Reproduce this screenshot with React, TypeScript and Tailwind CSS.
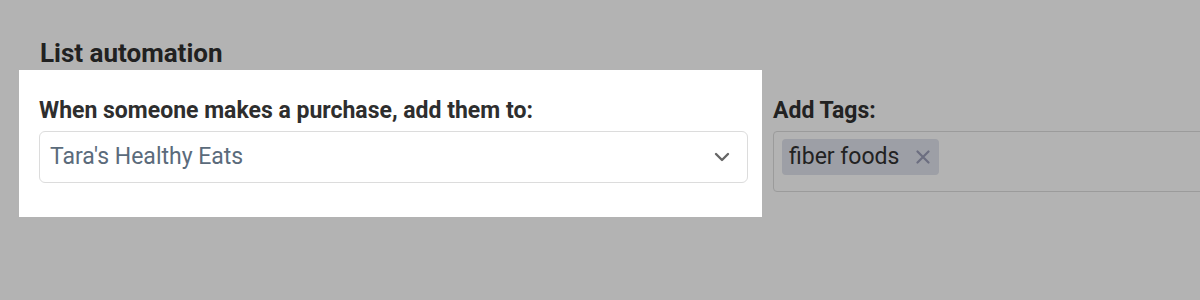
import React from 'react';

const font = { fontFamily: 'Roboto, "Liberation Sans", sans-serif' };

const ChevronDown: React.FC = () => (
  <svg width="18" height="18" viewBox="0 0 24 24" fill="none" className="text-[#666666]">
    <path d="M4 8l8 8 8-8" stroke="currentColor" strokeWidth="3.2" strokeLinecap="round" strokeLinejoin="round" />
  </svg>
);

const RemoveIcon: React.FC = () => (
  <svg width="14" height="14" viewBox="0 0 14 14" fill="none" className="text-[#6c6e80]">
    <path d="M1.5 1.5l11 11M12.5 1.5l-11 11" stroke="currentColor" strokeWidth="2.2" strokeLinecap="round" />
  </svg>
);

const App: React.FC = () => {
  return (
    <div className="w-[1200px] h-[300px] overflow-hidden bg-[#b3b3b3] pl-[19px] pt-[36px]" style={font}>
      <h2 className="ml-[21px] text-[26px] leading-[34px] font-bold text-[#212121]">List automation</h2>

      <div className="flex">
        {/* highlighted step */}
        <div className="w-[743px] h-[147px] shrink-0 bg-white pl-[20px] pr-[14px] pt-[27px]">
          <label className="block text-[23px] leading-[28px] font-bold text-[#2e2e2e]">
            When someone makes a purchase, add them to:
          </label>
          <div className="mt-[6px] h-[52px] flex items-center justify-between rounded-md border border-[#dcdcdc] pl-[10px] pr-[16px]">
            <span className="text-[23px] text-[#5b6b7b]">Tara's Healthy Eats</span>
            <ChevronDown />
          </div>
        </div>

        <div className="ml-[11px] w-[720px] shrink-0 pt-[27px]">
          <label className="block text-[23px] leading-[28px] font-bold text-[#222222]">Add Tags:</label>
          <div className="mt-[6px] h-[61px] rounded border border-[#9b9b9b] pl-[8px] pt-[7px]">
            <span className="inline-flex h-[36px] items-center gap-[17px] rounded bg-[#9d9fa6] pl-[7px] pr-[9px] text-[23px] text-[#222222]">
              fiber foods
              <RemoveIcon />
            </span>
          </div>
        </div>
      </div>
    </div>
  );
};

export default App;
